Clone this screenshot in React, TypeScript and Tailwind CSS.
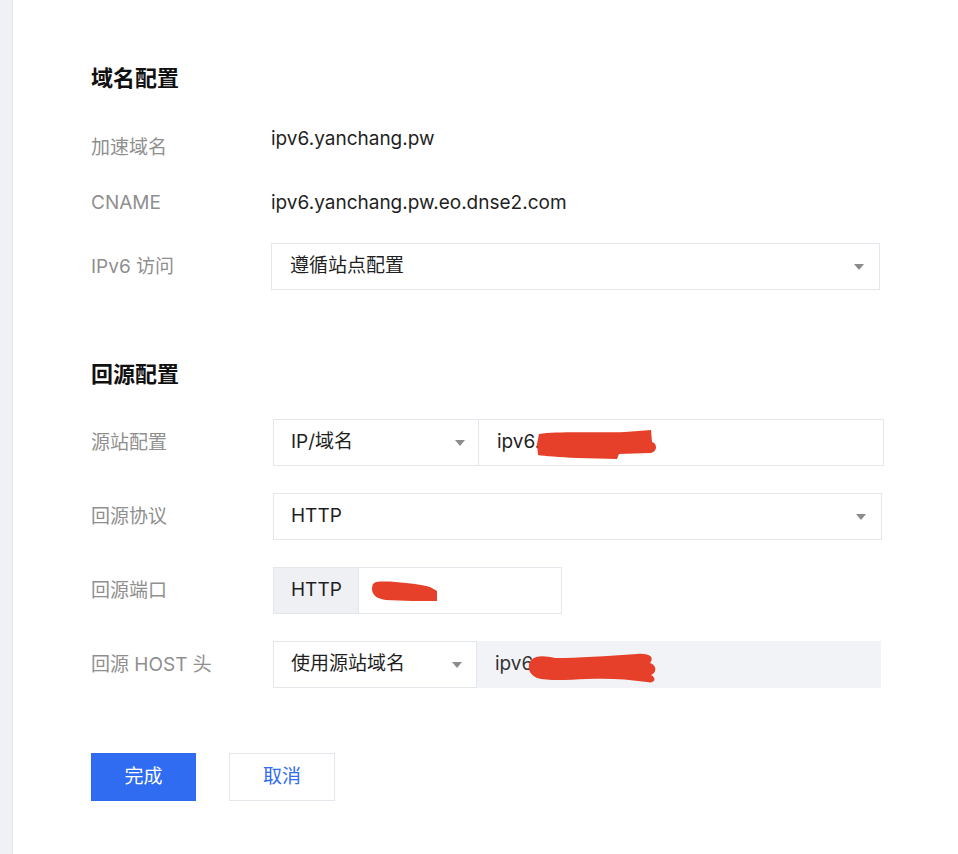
import type { ReactNode } from 'react'

const font = { fontFamily: 'Inter, "Noto Sans CJK SC", sans-serif' }

function Caret() {
  return (
    <svg width="10" height="6" viewBox="0 0 10 6" className="shrink-0">
      <path d="M0 0h10L5 6z" fill="#8c8c8c" />
    </svg>
  )
}

// red marker strokes hiding private values
function Scribble({ d, w, h, className }: { d: string; w: number; h: number; className: string }) {
  return (
    <svg width={w} height={h} viewBox={`0 0 ${w} ${h}`} className={`pointer-events-none absolute ${className}`}>
      <path d={d} fill="#e6402a" />
    </svg>
  )
}

function Field({ label, labelWidth, children }: { label: string; labelWidth: string; children: ReactNode }) {
  return (
    <div className="flex items-center">
      <div className={`${labelWidth} shrink-0 text-[19px] leading-[24px] text-[#8f8f8f]`}>{label}</div>
      {children}
    </div>
  )
}

function SectionTitle({ children, className }: { children: ReactNode; className: string }) {
  return <h2 className={`h-[30px] text-[22px] font-bold leading-[30px] text-[#111] ${className}`}>{children}</h2>
}

export default function App() {
  return (
    <div className="flex min-h-[854px] w-full bg-white" style={font}>
      <aside className="w-[13px] shrink-0 border-r border-[#e4e6eb] bg-[#eff1f5]" />

      <main className="flex flex-1 flex-col pl-[78px]">
        <SectionTitle className="mt-[63px]">域名配置</SectionTitle>

        <div className="mt-[34px] flex items-start">
          <div className="w-[180px] shrink-0 pt-[9px] text-[19px] leading-[24px] text-[#8f8f8f]">加速域名</div>
          <div className="text-[19px] leading-[24px] text-[#1f1f1f]">ipv6.yanchang.pw</div>
        </div>

        <div className="mt-[31px] flex items-center">
          <div className="w-[180px] shrink-0 text-[19px] leading-[24px] text-[#8f8f8f]">CNAME</div>
          <div className="text-[19px] leading-[24px] text-[#1f1f1f]">ipv6.yanchang.pw.eo.dnse2.com</div>
        </div>

        <div className="mt-[28px]">
          <Field label="IPv6 访问" labelWidth="w-[180px]">
            <div className="flex h-[47px] w-[609px] items-center justify-between border border-[#e3e6eb] pl-[18px] pr-[15px] text-[19px] text-[#1f1f1f]">
              <span>遵循站点配置</span>
              <Caret />
            </div>
          </Field>
        </div>

        <SectionTitle className="mt-[69px]">回源配置</SectionTitle>

        <div className="mt-[30px] flex flex-col gap-[27px] text-[19px] text-[#1f1f1f]">
          <Field label="源站配置" labelWidth="w-[182px]">
            <div className="flex h-[47px] w-[611px]">
              <div className="flex w-[206px] items-center justify-between border border-[#e3e6eb] pl-[17px] pr-[13px]">
                <span>IP/域名</span>
                <Caret />
              </div>
              <div className="relative flex flex-1 items-center border border-l-0 border-[#e3e6eb] pl-[18px]">
                <span>ipv6.y</span>
                <Scribble
                  className="left-[58px] top-[10px]"
                  w={120}
                  h={30}
                  d="M2 4 C20 1 60 3 88 2 L114 0 L115 12 C120 13 121 21 114 23 L82 24 L80 29 L40 28 C22 27 8 26 1 25 L0 14 Z"
                />
              </div>
            </div>
          </Field>

          <Field label="回源协议" labelWidth="w-[182px]">
            <div className="flex h-[47px] w-[609px] items-center justify-between border border-[#e3e6eb] pl-[17px] pr-[15px]">
              <span>HTTP</span>
              <Caret />
            </div>
          </Field>

          <Field label="回源端口" labelWidth="w-[182px]">
            <div className="flex h-[47px] w-[289px] border border-[#e3e6eb]">
              <div className="flex w-[85px] items-center border-r border-[#e3e6eb] bg-[#eef0f4] pl-[17px]">HTTP</div>
              <div className="relative flex-1">
                <Scribble
                  className="left-[13px] top-[13px]"
                  w={66}
                  h={21}
                  d="M4 1 C14 0 24 1 34 2 C44 3 52 4 58 6 L65 10 L65 20 C50 20 30 20 14 19 C6 18 1 15 0 9 C0 4 1 2 4 1 Z"
                />
              </div>
            </div>
          </Field>

          <Field label="回源 HOST 头" labelWidth="w-[182px]">
            <div className="flex h-[47px] w-[608px]">
              <div className="flex w-[204px] items-center justify-between border border-[#e3e6eb] pl-[17px] pr-[14px]">
                <span>使用源站域名</span>
                <Caret />
              </div>
              <div className="relative flex flex-1 items-center bg-[#f2f3f6] pl-[18px] text-[#333]">
                <span>ipv6</span>
                <Scribble
                  className="left-[50px] top-[11px]"
                  w={132}
                  h={32}
                  d="M4 8 C10 3 18 4 28 6 C50 6 80 4 110 2 C122 1 128 5 123 11 C130 13 130 21 124 23 C130 26 128 32 120 30 C100 27 80 26 60 27 C40 28 20 29 10 26 C1 22 0 14 4 8 Z"
                />
              </div>
            </div>
          </Field>
        </div>

        <div className="mt-[65px] flex gap-[33px]">
          <button className="h-[48px] w-[105px] border border-[#2d68ef] bg-[#2f6cf2] text-[19px] text-white">完成</button>
          <button className="h-[48px] w-[106px] border border-[#e3e6eb] bg-white text-[19px] text-[#2f6cf2]">取消</button>
        </div>
      </main>
    </div>
  )
}
